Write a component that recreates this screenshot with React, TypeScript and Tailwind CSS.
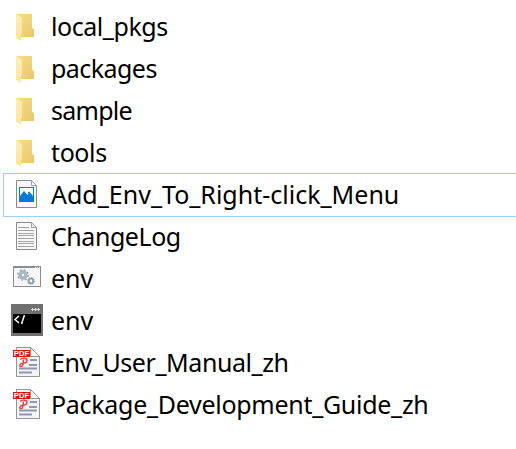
import type { ReactNode } from 'react';

const FolderIcon = () => (
  <svg width="32" height="32" viewBox="0 0 32 32" className="shrink-0">
    <defs>
      <linearGradient id="folderBack" x1="0" y1="0" x2="1" y2="1">
        <stop offset="0" stopColor="#f7dd8f" />
        <stop offset="1" stopColor="#e8c766" />
      </linearGradient>
      <linearGradient id="folderFlap" x1="0" y1="0" x2="0" y2="1">
        <stop offset="0" stopColor="#ffeeb8" />
        <stop offset="1" stopColor="#fde39a" />
      </linearGradient>
    </defs>
    <path d="M5 3H21V16.5L23 18.5V26H8Z" fill="url(#folderBack)" />
    <path d="M5 3L11 7V22.5L10 23.5V30L5 26.5Z" fill="url(#folderFlap)" />
  </svg>
);

const Page = () => (
  <>
    <path d="M5.5 1.5H20.5L25.5 6.5V28.5H5.5Z" fill="#f9f9f9" stroke="#8b8b8b" />
    <path d="M20.5 1.5V6.5H25.5Z" fill="#ffffff" stroke="#a0a0a0" />
  </>
);

const ImageIcon = () => (
  <svg width="32" height="32" viewBox="0 0 32 32" className="shrink-0">
    <Page />
    <rect x="8" y="8" width="15" height="15" fill="#0a78d7" />
    <path d="M9 9H22V18L18.5 13.5L16.5 16L13 12L9 17Z" fill="#ffffff" />
    <path d="M16.5 13.5L18 12.5L22 17V19.5L19 16Z" fill="#0a78d7" />
  </svg>
);

const TextIcon = () => (
  <svg width="32" height="32" viewBox="0 0 32 32" className="shrink-0">
    <Page />
    <path
      d="M7 6.5H18M7 9.5H23M7 12.5H23M7 14.5H23M7 17.5H23M7 20.5H23M7 22.5H23M7 25.5H23"
      stroke="#a3a3a3"
    />
  </svg>
);

const BatchIcon = () => (
  <svg width="32" height="32" viewBox="0 0 32 32" className="shrink-0">
    <rect x="2.5" y="3.5" width="27" height="20" fill="#f7f7f7" stroke="#8a8d90" />
    <path d="M2 4H30" stroke="#8a8d90" strokeWidth="2" />
    <path d="M24 4.5H29" stroke="#ffffff" strokeDasharray="1 1" />
    <circle cx="12" cy="12" r="3.3" fill="none" stroke="#a9b8c2" strokeWidth="2.8" />
    <circle cx="12" cy="12" r="5.2" fill="none" stroke="#93a3ae" strokeWidth="1.4" strokeDasharray="2.04 2.04" />
    <circle cx="12" cy="12" r="1.8" fill="#ffffff" stroke="#8798a5" strokeWidth=".7" />
    <circle cx="20" cy="18" r="2.3" fill="#ffffff" stroke="#8fa1ad" strokeWidth="1.8" />
    <circle cx="20" cy="18" r="3.4" fill="none" stroke="#8b9aa5" strokeWidth="1" strokeDasharray="1.33 1.33" />
  </svg>
);

const ConsoleIcon = () => (
  <svg width="32" height="32" viewBox="0 0 32 32" className="shrink-0 overflow-visible">
    <rect y="-1" width="32" height="32" fill="#707070" />
    <rect x="2" y="9" width="28" height="19" fill="#000000" />
    <path d="M20 4.5H29M21.5 3V6M24.5 3V6M27.5 3V6" stroke="#e8e8e8" strokeWidth=".9" />
    <path d="M8 11L4 14.5L8 18M13.5 10L10.5 19" fill="none" stroke="#ffffff" strokeWidth="1.5" />
  </svg>
);

const PdfIcon = () => (
  <svg width="32" height="32" viewBox="0 0 32 32" className="shrink-0">
    <path d="M5.5 .5H19.5L28.5 9.5V29.5H5.5Z" fill="#f3f4f7" stroke="#949494" />
    <path d="M19.5 .5V9.5H28.5Z" fill="#ffffff" stroke="#949494" />
    <path d="M19 13H26M18 18H26M8 21.5H26M8 25.5H21" stroke="#9297ad" strokeWidth="1.8" />
    <path
      d="M9 12.5C11 10.6 16 10.6 16 13.4C16 16 12.5 16.6 9.5 16.4M12.3 12.5C12.5 16 12 19.6 10 19.6C7.6 19.6 8.6 16.8 11.5 16.4"
      fill="none"
      stroke="#e8403e"
      strokeWidth="1.4"
    />
    <rect x="2" y="3" width="17" height="7" fill="#e80c0c" />
    <text
      x="2.8"
      y="9.2"
      fontSize="7.8"
      fontWeight="700"
      textLength="15.4"
      lengthAdjust="spacingAndGlyphs"
      fill="#ffffff"
      className="font-['Liberation_Sans',sans-serif]"
    >
      PDF
    </text>
  </svg>
);

type FileItem = {
  id: number;
  name: string;
  icon: ReactNode;
  tracking?: string;
  selected?: boolean;
};

const files: FileItem[] = [
  { id: 1, name: 'local_pkgs', icon: <FolderIcon />, tracking: 'tracking-[-0.45px]' },
  { id: 2, name: 'packages', icon: <FolderIcon />, tracking: 'tracking-[-0.55px]' },
  { id: 3, name: 'sample', icon: <FolderIcon />, tracking: 'tracking-[-0.75px]' },
  { id: 4, name: 'tools', icon: <FolderIcon />, tracking: 'tracking-[-0.4px]' },
  { id: 5, name: 'Add_Env_To_Right-click_Menu', icon: <ImageIcon />, selected: true },
  { id: 6, name: 'ChangeLog', icon: <TextIcon />, tracking: 'tracking-[-0.45px]' },
  { id: 7, name: 'env', icon: <BatchIcon /> },
  { id: 8, name: 'env', icon: <ConsoleIcon /> },
  { id: 9, name: 'Env_User_Manual_zh', icon: <PdfIcon />, tracking: 'tracking-[-0.43px]' },
  { id: 10, name: 'Package_Development_Guide_zh', icon: <PdfIcon />, tracking: 'tracking-[-0.29px]' },
];

export default function App() {
  return (
    <main className="h-[449px] w-[516px] overflow-hidden bg-white pt-[6px] pl-[3px] font-['Noto_Sans','Open_Sans',sans-serif] text-[25px] text-black">
      <ul>
        {files.map((file) => (
          <li
            key={file.id}
            className={`flex items-center gap-2 border-l pl-[7px] ${
              file.selected ? '-my-px h-[44px] border-y border-[#99d1ff]' : 'h-[42px] border-transparent'
            }`}
          >
            {file.icon}
            <span className={`pb-0.5 leading-[40px] whitespace-nowrap ${file.tracking ?? ''}`}>{file.name}</span>
          </li>
        ))}
      </ul>
    </main>
  );
}
